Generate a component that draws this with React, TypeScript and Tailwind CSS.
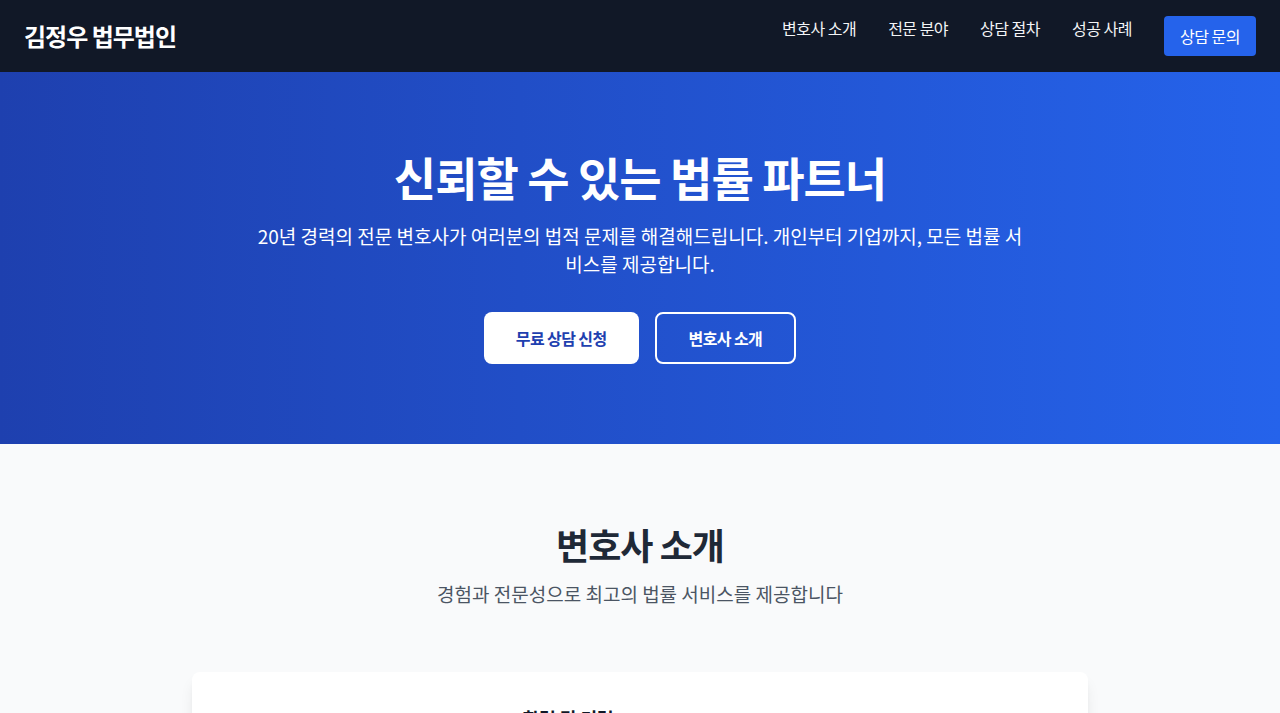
import React from "react";

const font = { fontFamily: '"Noto Sans CJK KR", "Noto Sans", sans-serif' };

export default function App() {
  return (
    <div className="min-h-screen bg-gray-50" style={font}>
      <nav className="bg-[#111827] px-6 py-4 flex items-center justify-between">
        <div className="text-white font-bold text-2xl tracking-[-1px] leading-8">김정우 법무법인</div>
        <div className="flex gap-8 text-gray-100 text-base tracking-[-0.5px] leading-6">
          <a href="#about">변호사 소개</a>
          <a href="#areas">전문 분야</a>
          <a href="#process">상담 절차</a>
          <a href="#cases">성공 사례</a>
          <a href="#contact" className="bg-[#2563eb] text-white rounded px-4 py-2">상담 문의</a>
        </div>
      </nav>

      <section className="bg-gradient-to-r from-[#1e40af] to-[#2563eb] py-20 text-white text-center">
        <h1 className="text-[46px] leading-[48px] font-bold tracking-[-1px] mb-[22px]">신뢰할 수 있는 법률 파트너</h1>
        <p className="max-w-3xl mx-auto text-[19px] leading-7 mb-[34px]">
          20년 경력의 전문 변호사가 여러분의 법적 문제를 해결해드립니다. 개인부터 기업까지, 모든 법률 서비스를 제공합니다.
        </p>
        <div className="flex justify-center gap-4">
          <a href="#contact" className="bg-white text-[#1e40af] font-semibold rounded-lg px-8 py-[14px] text-base leading-6 tracking-[-0.6px]">무료 상담 신청</a>
          <a href="#about" className="border-2 border-white text-white font-semibold rounded-lg px-8 py-3 text-base leading-6 tracking-[-0.6px]">변호사 소개</a>
        </div>
      </section>

      <section className="bg-[#f9fafb] py-20 px-6">
        <div className="text-center mb-16">
          <h2 className="text-4xl leading-10 font-bold tracking-[-1px] text-[#1f2937] mb-4">변호사 소개</h2>
          <p className="text-[19px] leading-7 text-[#4b5563]">경험과 전문성으로 최고의 법률 서비스를 제공합니다</p>
        </div>
        <div className="max-w-4xl mx-auto bg-white rounded-lg shadow-lg overflow-hidden flex">
          <div className="w-1/3 p-8 pt-16">
            <div className="w-full h-64 rounded-lg bg-gray-200" />
          </div>
          <div className="w-2/3 p-8">
            <h3 className="text-[18px] leading-7 font-semibold text-[#111827] mb-4">학력 및 경력</h3>
            <ul className="space-y-2 text-[#4b5563] text-[15px]">
              <li>서울대학교 법과대학 졸업</li>
              <li>제40회 사법시험 합격</li>
              <li>사법연수원 제30기 수료</li>
              <li>前 서울중앙지방법원 판사</li>
            </ul>
          </div>
        </div>
      </section>
    </div>
  );
}
